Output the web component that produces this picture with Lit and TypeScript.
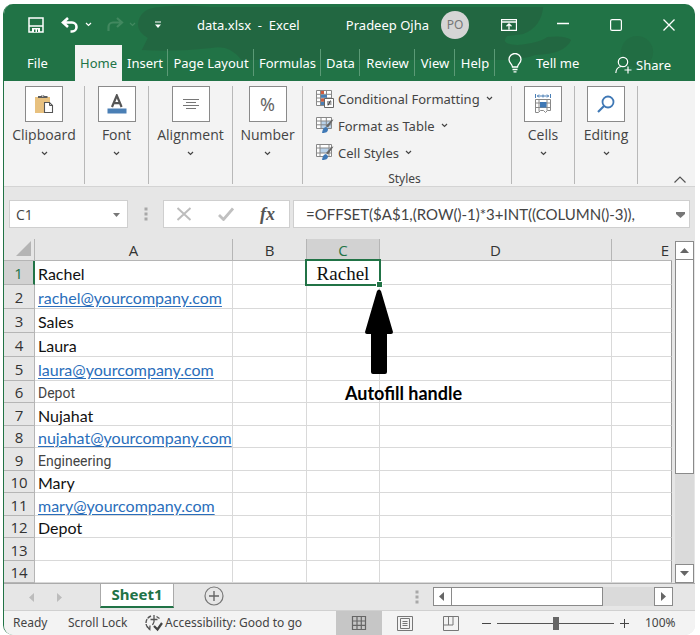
import { LitElement, html, css, svg, nothing } from "lit";
import { customElement } from "lit/decorators.js";
import { classMap } from "lit/directives/class-map.js";

type Row = { text: string; kind?: "link" | "plain" };

const rows: Row[] = [
  { text: "Rachel" },
  { text: "rachel@yourcompany.com", kind: "link" },
  { text: "Sales" },
  { text: "Laura" },
  { text: "laura@yourcompany.com", kind: "link" },
  { text: "Depot", kind: "plain" },
  { text: "Nujahat" },
  { text: "nujahat@yourcompany.com", kind: "link" },
  { text: "Engineering", kind: "plain" },
  { text: "Mary" },
  { text: "mary@yourcompany.com", kind: "link" },
  { text: "Depot" },
  { text: "" },
  { text: "" },
];

const icon = (w: number, h: number, body: unknown) => html`<svg class="icon" width=${w} height=${h} viewBox="0 0 ${w} ${h}" fill="none" aria-hidden="true">${body}</svg>`;

const chevron = html`<svg class="icon" width="7" height="5" viewBox="0 0 7 5" fill="none" aria-hidden="true"><path d="M1 1l2.500 2.500L6 1" stroke="currentColor" stroke-width="1.200"/></svg>`;
const triangle = (d: string) => icon(9, 9, svg`<path d=${d} fill="currentColor"/>`);

const icons = {
  save: icon(16, 16, svg`<path d="M1 1h14v14H1z" stroke="#fff" stroke-width="1.500"/><path d="M1 9h14" stroke="#fff" stroke-width="1.500"/><path d="M4 15v-4h8v4z" fill="#fff"/><path d="M6 12.500h1.500V15H6zM9 12.500h1V15H9z" fill="#217346"/>`),
  undo: icon(18, 16, svg`<path d="M7 1L2 5.500 7 10M2.500 5.500H11a4.500 4.500 0 0 1 0 9H9.500" stroke="#fff" stroke-width="2.600"/>`),
  redo: icon(18, 16, svg`<path d="M11 1l5 4.500-5 4.500M15.500 5.500H7A4.500 4.500 0 0 0 2.500 10v4" stroke="#41885f" stroke-width="2.200"/>`),
  redoList: html`<svg class="icon" width="7" height="5" viewBox="0 0 7 5" fill="none" aria-hidden="true"><path d="M1 1l2.500 2.500L6 1" stroke="#41885f" stroke-width="1.200"/></svg>`,
  more: icon(6, 8, svg`<path d="M0 1h6" stroke="#fff" stroke-width="1.200"/><path d="M0 3.500h6L3 7z" fill="#fff"/>`),
  ribbon: icon(16, 12, svg`<path d="M.500.500h15v11H.500zM.500 3h15M8 10.500V5M5.500 7.200L8 4.800l2.500 2.400" stroke="#fff" stroke-width="1.300"/>`),
  min: icon(12, 12, svg`<path d="M0 4.500h12" stroke="#fff" stroke-width="1.300"/>`),
  max: icon(12, 12, svg`<rect x=".600" y=".600" width="10.800" height="10.800" rx="1.500" stroke="#fff" stroke-width="1.200"/>`),
  close: icon(12, 12, svg`<path d="M.500.500l11 11M11.500.500l-11 11" stroke="#fff" stroke-width="1.300"/>`),
  bulb: icon(14, 20, svg`<path d="M4.500 14c0-3-3.500-4-3.500-7.500a6 6 0 0 1 12 0C13 10 9.500 11 9.500 14zM4.500 16.500h5M5.500 18.800h3" stroke="#fff" stroke-width="1.300"/>`),
  share: icon(17, 18, svg`<circle cx="8" cy="6" r="4.700" stroke="#fff" stroke-width="1.200"/><path d="M.800 17c.2-4 2-6 5.500-6.500M13 10.500v7M9.500 14h7" stroke="#fff" stroke-width="1.200"/>`),
  clipboard: icon(20, 20, svg`<path d="M1 3h15v16H1z" fill="#e8c17f"/><path d="M4 2h3a2 2 0 0 1 3.500 0h3v2H4z" fill="#5c5c5c"/><circle cx="8.700" cy="2" r=".8" fill="#fff"/><path d="M10.500 8.500h5l3 3v7h-8z" fill="#fff" stroke="#555" stroke-width="1.100"/><path d="M15.500 8.500v3h3" stroke="#555"/>`),
  font: icon(20, 20, svg`<path d="M5 13l4.800-11.500L14.600 13M6.800 9.200h6" stroke="#555" stroke-width="2.200"/><path d="M.500 14.500h19v5H.500z" fill="#4a7fb5"/>`),
  align: icon(16, 12, svg`<path d="M0 1.500h16M3 4.500h10M0 7.500h16M3 10.500h10" stroke="#777"/>`),
  cells: icon(20, 20, svg`<path d="M2.500 0v4M17.500 0v4M4 2h12M6 .500L4.500 2 6 3.500M14 .500L15.500 2 14 3.500M10 .500v3" stroke="#4a7fb5"/><path d="M2.500 5.500h15v11h-3l-2 2-2-2H7.500l-2 2h-3zM2.500 9h15M2.500 13.500h15M6 5.500v12M14 5.500v11" stroke="#888"/><path d="M7 8h6.500v5.500H7z" fill="#3f78b5"/>`),
  search: icon(18, 18, svg`<circle cx="11" cy="7" r="5.500" stroke="#3f78b5" stroke-width="1.800"/><path d="M7 11l-6 6" stroke="#3f78b5" stroke-width="2.200"/>`),
  conditional: icon(18, 18, svg`<path d="M.500.500h15v15H.500zM.500 4.300h15M.500 8h15M.500 11.700h15M4.500.500v15M10.500.500v15" fill="#fff" stroke="#888"/><path d="M5 1h3v3H5zM5 8.500h4v3H5z" fill="#cf5b3f"/><path d="M5 4.700h6v3H5zM5 12h3v3H5z" fill="#4a7fb5"/><path d="M8.500 8.500h9v9h-9z" fill="#fff" stroke="#666"/><path d="M11 12h4.500M11 14h4.500M14.500 10.500l-2.500 5" stroke="#444"/>`),
  table: icon(18, 17, svg`<path d="M.500.500h15v11H.500z" fill="#fff"/><path d="M5 4h10.500v7.500H5z" fill="#b9d2ea"/><path d="M.500.500h15v11H.500zM.500 4h15M.500 7.800h15M5 .500v11M10.300.500v11" stroke="#888"/><path d="M17.500 2.500l-5.500 8-2-1.500 5.500-6z" fill="#666"/><path d="M6 16c.5-4 2-6 4-6l2 2c0 3-2 4-6 4z" fill="#3f78b5"/>`),
  styles: icon(18, 17, svg`<path d="M.500.500h15v12H.500z" fill="#fff"/><path d="M4 4h9v5H4z" fill="#b9d2ea"/><path d="M.500.500h15v12H.500zM.500 4h15M.500 9h15M4 .500v12M13 .500v12" stroke="#888"/><path d="M17.500 2.500l-5.500 8-2-1.500 5.500-6z" fill="#666"/><path d="M6 16c.5-4 2-6 4-6l2 2c0 3-2 4-6 4z" fill="#3f78b5"/>`),
  cancel: icon(16, 14, svg`<path d="M1.500 1l13 12M14.500 1l-13 12" stroke="#bdbdbd" stroke-width="2"/>`),
  enter: icon(16, 14, svg`<path d="M1 8l4.500 4.500L15 1.500" stroke="#c0c0c0" stroke-width="2.800"/>`),
  dots: icon(4, 14, svg`<path d="M.500.500h3v3h-3zM.500 5.500h3v3h-3zM.500 10.500h3v3h-3z" fill="#a8a8a8"/>`),
  add: icon(20, 20, svg`<circle cx="10" cy="10" r="9" stroke="#777" stroke-width="1.200"/><path d="M10 5v10M5 10h10" stroke="#666" stroke-width="1.400"/>`),
  access: icon(18, 18, svg`<path d="M6 2C2.500 3.500 1 6 1 9c0 2.500 1.500 4.500 3.500 6" stroke="#555" stroke-width="1.400" stroke-dasharray="4 1"/><path d="M2 12.500L4.800 15.500 5 11.500M9 1v7M5.500 5.500h7M9 8l-1.500 3M11.500 2.500l3 2" stroke="#555" stroke-width="1.300"/><path d="M9 12l3.500 3.500L17 9" stroke="#444" stroke-width="2.200"/>`),
  normal: icon(16, 16, svg`<path d="M1.500 1.500h13v13h-13zM1.500 6h13M1.500 10.300h13M6 1.500v13M10.300 1.500v13" stroke="#666" stroke-width="1.200"/>`),
  page: icon(16, 15, svg`<path d="M.500.500h15v14H.500zM3.500 2.500h9v10h-9zM5.500 5.500h5M5.500 7.500h5M5.500 9.500h5" stroke="#777"/>`),
  breaks: icon(16, 15, svg`<path d="M.500.500h15v14H.500zM.500 9h9.500V.500M5.500.500V9" stroke="#777"/>`),
  collapse: icon(12, 7, svg`<path d="M.500 6.500l5.500-5.500 5.500 5.500" stroke="#555" stroke-width="1.200"/>`),
};

const tabs = ["Insert", "Page Layout", "Formulas", "Data", "Review", "View", "Help"];

@customElement("app-root")
export class AppRoot extends LitElement {
  static styles = css`
    :host {
      display: block;
      padding: 4px 5px 0 3px;
      background: #fff;
      color: #333;
      font: 13px/18px "Noto Sans", sans-serif;
    }
    * { box-sizing: border-box; }
    .icon { display: block; flex: none; }
    button { font: inherit; color: inherit; background: none; border: 0; padding: 0; margin: 0; }
    .window {
      background: #e6e6e6;
      border-left: 1px solid #217346;
      border-radius: 10px;
      overflow: hidden;
    }
    .top { position: relative; background: #217346; color: #fff; }
    .art { position: absolute; inset: 0; width: 100%; height: 100%; }
    .title { position: relative; display: flex; align-items: center; height: 41px; padding: 0 20px 0 24px; }
    .quick { display: grid; grid-template-columns: 33px 24px 21px 23px 26px 42px; align-items: center; }
    .name { flex: 1; white-space: pre; }
    .avatar {
      width: 28px; height: 28px; margin: 0 32px 0 12px;
      border-radius: 50%; background: #d5d5d5; color: #777;
      font-size: 12px; line-height: 28px; text-align: center;
    }
    .controls { display: grid; grid-template-columns: 56px 53px 53px 12px; align-items: center; }
    .tabs {
      position: relative; display: grid; height: 36px; padding-right: 24px;
      grid-template-columns: 71px 47px 46px 86px 67px 39px 55px 40px 40px 1fr auto;
    }
    .tab { text-align: center; white-space: nowrap; position: relative; }
    .tab.file { padding-right: 4px; }
    .tab.home { background: #f3f3f3; color: #217346; }
    .tab.ruled::after {
      content: ""; position: absolute; right: 0; top: 4px; height: 27px;
      border-right: 1px solid #5b9a76;
    }
    .tell, .share { display: flex; align-items: center; }
    .tell { gap: 14px; padding-left: 13px; }
    .share { gap: 4px; padding-top: 3px; }
    .ribbon { display: flex; height: 106px; padding-top: 5px; background: #f3f3f3; border-bottom: 1px solid #d4d4d4; }
    .group {
      display: flex; flex-direction: column; align-items: center; height: 98px;
      border-right: 1px solid #b8b8b8; color: #444;
    }
    .g-clipboard { width: 81px; }
    .g-font { width: 64px; }
    .g-alignment { width: 84px; }
    .g-number { width: 70px; }
    .g-cells, .g-editing { width: 63px; }
    .tile {
      display: grid; place-items: center; width: 38px; height: 36px;
      background: #fff; border: 1px solid #8a8a8a; color: #666; font-size: 18px;
    }
    .label { font: 14px/20px "Open Sans", sans-serif; margin: 3px 0 6px; }
    .styles { flex: 1; align-items: stretch; gap: 2px; padding: 0 8px 0 13px; }
    .option { flex: none; display: flex; align-items: center; gap: 4px; height: 25px; width: max-content; }
    .option .icon:last-child { margin-left: 2px; }
    .caption { flex: none; text-align: center; font-size: 12px; line-height: 18px; margin: 3px 10px 0 0; }
    .tail { width: 57px; display: flex; justify-content: flex-end; align-items: flex-end; padding: 0 9px 3px 0; }
    .formula { display: flex; gap: 3px; height: 52px; padding: 13px 5px 11px; }
    .box { display: flex; align-items: center; background: #fff; border: 1px solid #cfcfcf; height: 28px; color: #777; }
    .box input { flex: 1; min-width: 0; border: 0; outline: 0; padding: 0; background: none; color: #444; }
    .ref { width: 119px; padding: 0 6px; }
    .ref input { font: 14px "Open Sans", sans-serif; }
    .grip { width: 29px; display: grid; place-items: center; }
    .tools { width: 127px; justify-content: space-between; padding: 0 14px 0 12px; }
    .fx { font: italic bold 18px/20px "Liberation Serif", serif; color: #555; }
    .expr { flex: 1; padding: 0 4px 0 12px; }
    .expr input { font: 15px Lato, sans-serif; }
    .sheet { display: flex; justify-content: space-between; align-items: stretch; padding-right: 1px; }
    .grid { flex: 1; border-spacing: 0; table-layout: fixed; width: 100%; font: 16px/18px Lato, sans-serif; color: #111; }
    .cr { width: 31px; }
    .ca { width: 198px; }
    .cb { width: 74px; }
    .cc { width: 73px; }
    .ce { width: 60px; }
    th { padding: 1px 0 0; text-align: center; font: 400 15px/20px "Open Sans", sans-serif; background: #e6e6e6; color: #333; border-right: 1px solid #b5b5b5; border-bottom: 1px solid #b5b5b5; }
    thead th { height: 22px; }
    thead th.last { text-align: right; padding-right: 3px; border-right: 0; }
    th.on { background: #d2d2d2; color: #217346; }
    tbody th.on { border-right: 2px solid #217346; }
    .corner { padding: 0 3px 2px 0; }
    .corner .icon { margin-left: auto; }
    td { position: relative; padding: 3px 0 0 3px; background: #fff; border-right: 1px solid #d9d9d9; border-bottom: 1px solid #d9d9d9; white-space: nowrap; }
    td.last { border-right-color: #999; }
    tbody tr { height: 23px; }
    tbody tr:nth-child(even) { height: 22px; }
    tbody tr:nth-child(-n + 5) { height: 24px; }
    td a { color: #2a6ebb; text-underline-offset: 2px; }
    .plain { font: 14px/18px Roboto, sans-serif; color: #444; }
    .active { text-align: center; padding: 2px 0 0; font: 19px/20px "Liberation Serif", serif; }
    .frame { position: absolute; inset: -2px; border: 2px solid #217346; z-index: 1; }
    .frame::after {
      content: ""; position: absolute; right: -4px; bottom: -4px; width: 5px; height: 5px;
      background: #217346; border: 1px solid #fff; box-sizing: content-box;
    }
    .note { position: absolute; z-index: 2; left: 38px; top: 28px; margin: 0; font: bold 18px/20px Lato, sans-serif; color: #000; }
    .note .icon { margin: 0 0 9px 20px; }
    .bar { background: #dadada; display: flex; }
    .vbar { flex: none; flex-direction: column; width: 19px; margin: 2px 0 0 3px; }
    .step { display: grid; place-items: center; flex: none; width: 19px; height: 19px; background: #fff; border: 1px solid #8a8a8a; color: #666; }
    .vthumb { height: 214px; background: #fff; border: 1px solid #8a8a8a; border-top: 0; }
    .space { flex: 1; }
    .bottom { display: flex; align-items: flex-start; height: 27px; border-top: 1px solid #aaa; padding-right: 22px; }
    .nav { display: flex; gap: 18px; width: 96px; height: 26px; padding-left: 24px; align-items: center; color: #bcbcbc; }
    .sheet-tab {
      width: 74px; height: 24px; background: #fff; color: #217346; font-weight: 700; font-size: 15px; line-height: 18px;
      padding-bottom: 3px; border: 1px solid #aaa; border-top: 0; border-bottom: 2px solid #217346;
    }
    .add { margin: 2px auto 0 30px; }
    .dots { margin: 6px 14px 0 0; }
    .hbar { width: 240px; margin-top: 3px; }
    .hthumb { width: 151px; height: 19px; background: #fff; border: 1px solid #8a8a8a; border-left: 0; }
    .status { display: flex; align-items: center; height: 25px; padding: 0 22px 0 9px; background: #f3f3f3; border-top: 1px solid #d0d0d0; font-size: 12px; color: #444; }
    .ready { width: 55px; }
    .lock { width: 77px; }
    .checker { display: flex; align-items: center; gap: 2px; margin-right: auto; white-space: nowrap; }
    .view { display: grid; place-items: center; width: 46px; height: 24px; }
    .view.on { background: #c6c6c6; }
    .zoom { display: flex; align-items: center; gap: 6px; margin-left: 8px; }
    .zoom .icon { color: #444; }
    .percent { margin-left: 10px; width: 28px; white-space: nowrap; }
    .range { appearance: none; width: 117px; height: 16px; margin: 0; background: linear-gradient(#555, #555) center / 100% 1px no-repeat; }
    .range::-webkit-slider-thumb { appearance: none; width: 6px; height: 13px; background: #666; }
  `;

  private group(name: string, picture: unknown) {
    return html`<div class="group g-${name.toLowerCase()}">
      <button class="tile" aria-label=${name}>${picture}</button>
      <span class="label">${name}</span>${chevron}
    </div>`;
  }

  private option(picture: unknown, name: string) {
    return html`<button class="option">${picture}<span>${name}</span>${chevron}</button>`;
  }

  private note() {
    return html`<span class="frame"></span>
      <figure class="note">
        ${icon(28, 85, svg`<path d="M12 2q2-3 4 0l12 41q0 2-2 2h-4v38q0 2-2 2H8q-2 0-2-2V45H2q-2 0-2-2z" fill="#000"/>`)}
        <figcaption>Autofill handle</figcaption>
      </figure>`;
  }

  private row(r: Row, i: number) {
    const first = i === 0;
    return html`<tr>
      <th scope="row" class=${classMap({ on: first })}>${i + 1}</th>
      <td class=${classMap({ plain: r.kind === "plain" })}>${r.kind === "link" ? html`<a href="mailto:${r.text}">${r.text}</a>` : r.text}</td>
      <td></td>
      <td class=${classMap({ active: first })}>${first ? html`Rachel${this.note()}` : nothing}</td>
      <td></td>
      <td class="last"></td>
    </tr>`;
  }

  render() {
    return html`<main class="window">
      <header class="top">
        <svg class="art" viewBox="0 0 692 77" preserveAspectRatio="none" aria-hidden="true">
          <g fill="#24633f">
            <path d="M134 20Q136 4 156 3q24-3 50 0h334q-2 20-20 27l-16 2q-8 8 10 9 22-2 30-8 18-2 24 3-6 14-36 15-10 4-30 5H238q-12-16-30-12-34 4-70 2l6-12q-10-6-10-14z" opacity=".7"/>
            <circle cx="634" cy="48" r="16" opacity=".4"/>
          </g>
        </svg>
        <div class="title">
          <div class="quick">
            <button aria-label="Save">${icons.save}</button>
            <button aria-label="Undo">${icons.undo}</button>
            <button aria-label="Undo list">${chevron}</button>
            <button aria-label="Redo">${icons.redo}</button>
            <button aria-label="Redo list">${icons.redoList}</button>
            <button aria-label="Customize toolbar">${icons.more}</button>
          </div>
          <span class="name">data.xlsx  -  Excel</span>
          <span>Pradeep Ojha</span>
          <span class="avatar">PO</span>
          <div class="controls">
            <button aria-label="Ribbon display">${icons.ribbon}</button>
            <button aria-label="Minimize">${icons.min}</button>
            <button aria-label="Maximize">${icons.max}</button>
            <button aria-label="Close">${icons.close}</button>
          </div>
        </div>
        <nav class="tabs">
          <button class="tab file">File</button>
          <button class="tab home">Home</button>
          ${tabs.map((t) => html`<button class="tab ruled">${t}</button>`)}
          <button class="tell">${icons.bulb}Tell me</button>
          <button class="share">${icons.share}Share</button>
        </nav>
      </header>

      <section class="ribbon">
        ${this.group("Clipboard", icons.clipboard)}
        ${this.group("Font", icons.font)}
        ${this.group("Alignment", icons.align)}
        ${this.group("Number", "%")}
        <div class="group styles">
          ${this.option(icons.conditional, "Conditional Formatting")}
          ${this.option(icons.table, "Format as Table")}
          ${this.option(icons.styles, "Cell Styles")}
          <div class="caption">Styles</div>
        </div>
        ${this.group("Cells", icons.cells)}
        ${this.group("Editing", icons.search)}
        <div class="tail"><button aria-label="Collapse ribbon">${icons.collapse}</button></div>
      </section>

      <section class="formula">
        <div class="box ref">
          <input aria-label="Name box" value="C1" />
          <button aria-label="Names">${triangle("M1 3h7L4.500 7z")}</button>
        </div>
        <span class="grip">${icons.dots}</span>
        <div class="box tools">
          <button aria-label="Cancel">${icons.cancel}</button>
          <button aria-label="Enter">${icons.enter}</button>
          <button class="fx">fx</button>
        </div>
        <div class="box expr">
          <input aria-label="Formula" value="=OFFSET($A$1,(ROW()-1)*3+INT((COLUMN()-3))," />
          <button aria-label="Expand formula bar">${triangle("M0 2h9v2L4.500 8 0 4z")}</button>
        </div>
      </section>

      <section class="sheet">
        <table class="grid">
          <colgroup><col class="cr" /><col class="ca" /><col class="cb" /><col class="cc" /><col /><col class="ce" /></colgroup>
          <thead>
            <tr>
              <th class="corner">${icon(15, 15, svg`<path d="M15 0v15H0z" fill="#b4b4b4"/>`)}</th>
              <th scope="col">A</th>
              <th scope="col">B</th>
              <th scope="col" class="on">C</th>
              <th scope="col">D</th>
              <th scope="col" class="last">E</th>
            </tr>
          </thead>
          <tbody>${rows.map((r, i) => this.row(r, i))}</tbody>
        </table>
        <div class="bar vbar">
          <button class="step" aria-label="Scroll up">${triangle("M0 7h9L4.500 2z")}</button>
          <div class="vthumb"></div>
          <div class="space"></div>
          <button class="step" aria-label="Scroll down">${triangle("M0 2h9L4.500 7z")}</button>
        </div>
      </section>

      <section class="bottom">
        <div class="nav">
          <button aria-label="Previous sheet">${triangle("M6 0v9L1 4.500z")}</button>
          <button aria-label="Next sheet">${triangle("M2 0v9l5-4.500z")}</button>
        </div>
        <button class="sheet-tab">Sheet1</button>
        <button class="add" aria-label="New sheet">${icons.add}</button>
        <span class="dots">${icons.dots}</span>
        <div class="bar hbar">
          <button class="step" aria-label="Scroll left">${triangle("M6 0v9L1 4.500z")}</button>
          <div class="hthumb"></div>
          <div class="space"></div>
          <button class="step" aria-label="Scroll right">${triangle("M2 0v9l5-4.500z")}</button>
        </div>
      </section>

      <footer class="status">
        <span class="ready">Ready</span>
        <span class="lock">Scroll Lock</span>
        <button class="checker">${icons.access}<span>Accessibility: Good to go</span></button>
        <button class="view on" aria-label="Normal view">${icons.normal}</button>
        <button class="view" aria-label="Page layout view">${icons.page}</button>
        <button class="view" aria-label="Page break view">${icons.breaks}</button>
        <div class="zoom">
          <button aria-label="Zoom out">${icon(9, 9, svg`<path d="M0 4.500h9" stroke="currentColor"/>`)}</button>
          <input class="range" type="range" min="0" max="200" value="100" aria-label="Zoom" />
          <button aria-label="Zoom in">${icon(9, 9, svg`<path d="M0 4.500h9M4.500 0v9" stroke="currentColor"/>`)}</button>
          <span class="percent">100%</span>
        </div>
      </footer>
    </main>`;
  }
}
